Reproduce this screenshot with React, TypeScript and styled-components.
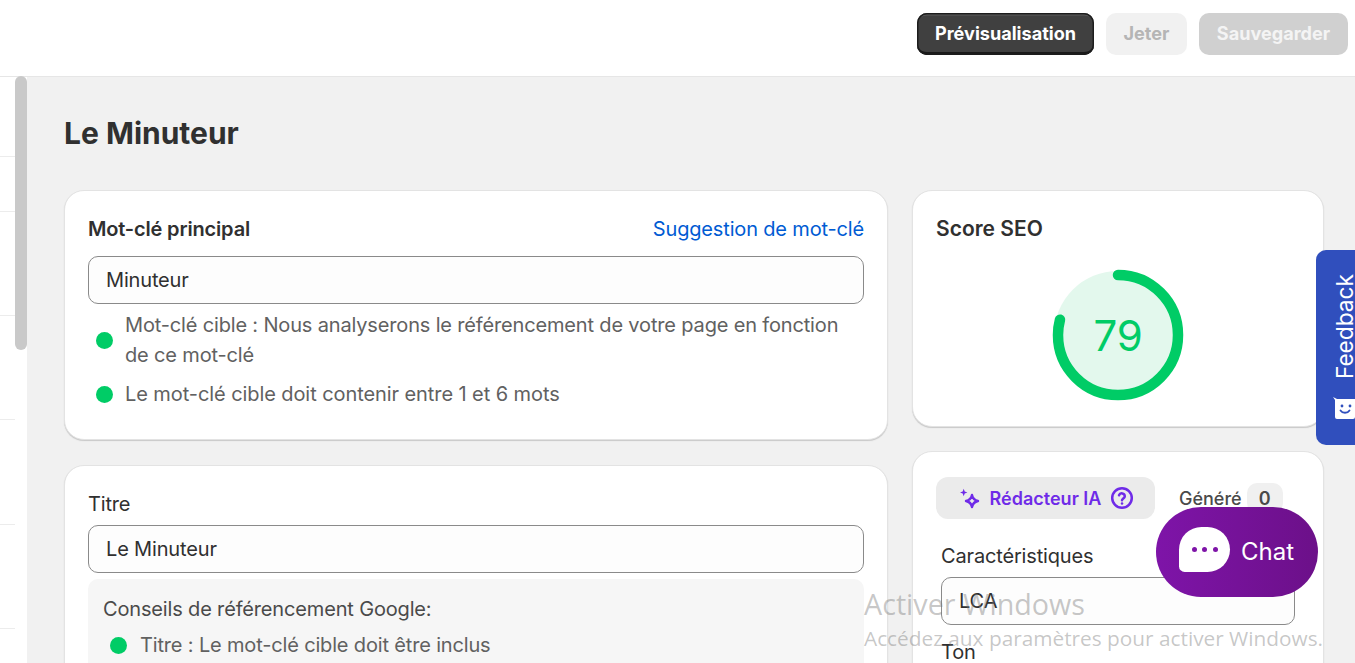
import React from "react";
import styled, { createGlobalStyle } from "styled-components";

const Global = createGlobalStyle`
  html, body { margin: 0; padding: 0; height: 663px; overflow: hidden; background: #fff; }
  body { font-family: Inter, "Liberation Sans", sans-serif; color: #303030; }
  #root { height: 663px; }
  * { box-sizing: border-box; }
`;

const Page = styled.div`
  position: relative;
  width: 1355px;
  height: 663px;
  overflow: hidden;
  display: flex;
  flex-direction: column;
`;

const TopBar = styled.header`
  height: 77px;
  flex: none;
  background: #fff;
  border-bottom: 1px solid #e6e6e6;
  display: flex;
  justify-content: flex-end;
  align-items: flex-start;
  gap: 12px;
  padding: 13px 7px 0 0;
`;

const BaseButton = styled.button`
  height: 42px;
  border-radius: 10px;
  border: 0;
  font: 700 18.1px Inter, sans-serif;
  padding: 0 0 2px;
`;

const PrimaryButton = styled(BaseButton)`
  width: 177px;
  background: #404040;
  color: #fff;
  box-shadow: inset 0 0 0 1.5px #1c1c1c, inset 0 3.5px 0 -1px #5c5c5c, inset 0 -4px 0 -1px #1a1a1a;
`;

const GhostButton = styled(BaseButton)`
  width: 81px;
  background: #f1f1f1;
  color: #b5b5b5;
`;

const SaveButton = styled(BaseButton)`
  width: 149px;
  background: #d0d0d0;
  color: #f4f4f4;
`;

const Body = styled.div`
  flex: 1;
  display: flex;
  min-height: 0;
`;

const SideList = styled.div`
  width: 15px;
  flex: none;
  display: flex;
  flex-direction: column;
  padding-top: 79px;
`;

const SideRow = styled.div<{ $h: number }>`
  height: ${(p) => p.$h}px;
  flex: none;
  border-bottom: 1px solid #ececec;
`;

const ScrollTrack = styled.div`
  width: 12px;
  flex: none;
  background: #fff;
`;

const ScrollThumb = styled.div`
  width: 12px;
  height: 274px;
  margin-top: -1px;
  border-radius: 6px;
  background: #c9c9c9;
`;

const Main = styled.main`
  flex: 1;
  min-width: 0;
  background: #f1f1f1;
  padding: 36px 31px 0 37px;
`;

const Title = styled.h1`
  margin: 0 0 37px;
  font-size: 30px;
  font-weight: 700;
  line-height: 40px;
  color: #303030;
`;

const Columns = styled.div`
  display: grid;
  grid-template-columns: 824px 412px;
  gap: 24px;
`;

const Column = styled.div<{ $gap: number }>`
  display: flex;
  flex-direction: column;
  gap: ${(p) => p.$gap}px;
`;

const Card = styled.section<{ $h?: number }>`
  background: #fff;
  border-radius: 20px;
  border: 1px solid #e3e3e3;
  box-shadow: 0 1px 1px #c8c8c8;
  letter-spacing: -0.16px;
  ${(p) => (p.$h ? `height: ${p.$h}px;` : "")}
`;

const KeywordCard = styled(Card)`
  padding: 21px 23px 0;
`;

const TitleCard = styled(Card)`
  padding: 23px 23px 0;
`;

const CardHead = styled.div`
  display: flex;
  justify-content: space-between;
  align-items: center;
  height: 33px;
  margin-bottom: 11px;
`;

const StrongLabel = styled.span`
  font-size: 20px;
  font-weight: 600;
`;

const TextLink = styled.a`
  font-size: 20px;
  color: #005bd3;
`;

const PlainLabel = styled.label`
  display: block;
  font-size: 20px;
  line-height: 30px;
  margin-bottom: 6px;
`;

const Field = styled.div`
  height: 48px;
  background: #fdfdfd;
  border: 1px solid #8a8a8a;
  border-radius: 10px;
  padding-left: 17px;
  display: flex;
  align-items: center;
  font-size: 20px;
  color: #303030;
`;

const Hints = styled.ul`
  margin: 6px 0 0;
  padding: 0;
  list-style: none;
  display: flex;
  flex-direction: column;
  gap: 9px;
`;

const Hint = styled.li<{ $spacing?: number }>`
  display: flex;
  align-items: center;
  gap: 12px;
  padding-left: 8px;
  font-size: 20px;
  line-height: 30px;
  color: #616161;
  ${(p) => (p.$spacing !== undefined ? `letter-spacing: ${p.$spacing}px;` : "")}
`;

const TipHint = styled(Hint)`
  padding-left: 7px;
  gap: 13px;
`;

const Dot = styled.span`
  width: 17px;
  height: 17px;
  flex: none;
  border-radius: 50%;
  background: #00cc66;
`;

const Tips = styled.div`
  margin-top: 6px;
  background: #f6f6f6;
  border-radius: 10px;
  padding: 15px 15px 0;
  height: 120px;
`;

const TipsTitle = styled.div`
  font-size: 20px;
  line-height: 30px;
  color: #4a4a4a;
  margin-bottom: 6px;
`;

const ScoreCard = styled(Card)`
  padding: 21px 23px 0;
`;

const ScoreTitle = styled.h2`
  margin: 0;
  font-size: 21px;
  font-weight: 600;
  line-height: 33px;
  letter-spacing: 0;
`;

const GaugeWrap = styled.div`
  position: relative;
  width: 132px;
  height: 132px;
  margin: 24px 0 0 116px;
`;

const GaugeValue = styled.div`
  position: absolute;
  inset: 0;
  display: flex;
  align-items: center;
  justify-content: center;
  font-size: 42px;
  color: #00cc66;
`;

const WriterCard = styled(Card)`
  padding: 25px 28px 0 23px;
  height: 240px;
`;

const TabRow = styled.div`
  display: flex;
  align-items: center;
  gap: 24px;
`;

const WriterTab = styled.div`
  width: 219px;
  height: 42px;
  border-radius: 12px;
  background: #ebebeb;
  display: flex;
  align-items: center;
  justify-content: center;
  gap: 9px;
  padding-left: 2px;
  font-size: 18px;
  font-weight: 600;
  letter-spacing: 0;
  color: #6f2be8;
`;

const Generated = styled.div`
  display: flex;
  align-items: center;
  gap: 5px;
  font-size: 18px;
  font-weight: 500;
  letter-spacing: 0;
  color: #4a4a4a;
`;

const Count = styled.span`
  width: 36px;
  height: 30px;
  border-radius: 10px;
  background: #f0f0f0;
  display: flex;
  align-items: center;
  justify-content: center;
  font-weight: 600;
`;

const WriterBody = styled.div`
  padding: 22px 0 0 5px;
`;

const WriterLabel = styled.div<{ $top?: number }>`
  font-size: 20px;
  line-height: 30px;
  color: #303030;
  margin-top: ${(p) => p.$top ?? 0}px;
  margin-bottom: 6px;
`;

const Feedback = styled.div`
  position: absolute;
  left: 1316px;
  top: 250px;
  width: 60px;
  height: 195px;
  border-radius: 10px;
  background: #304fbd;
  color: #fff;
`;

const FeedbackText = styled.span`
  position: absolute;
  left: 14px;
  top: 24px;
  writing-mode: vertical-rl;
  transform: rotate(180deg);
  font-size: 22.7px;
  line-height: 30px;
`;

const FeedbackIcon = styled.svg`
  position: absolute;
  left: 17px;
  top: 146px;
`;

const ChatBubble = styled.div`
  position: absolute;
  left: 1156px;
  top: 507px;
  width: 162px;
  height: 90px;
  border-radius: 45px;
  background: linear-gradient(90deg, #7e14a8, #6c1089);
  display: flex;
  align-items: center;
  padding: 0 0 2px 23px;
  gap: 11px;
  color: #fff;
  font-size: 24px;
`;

const ChatIcon = styled.div`
  width: 51px;
  height: 45px;
  margin-top: -3px;
  border-radius: 24px 24px 24px 6px;
  background: #fff;
  display: flex;
  align-items: center;
  justify-content: center;
  gap: 5.5px;
`;

const ChatDot = styled.span`
  width: 5px;
  height: 5px;
  border-radius: 50%;
  background: #7e14a8;
`;

const Watermark = styled.div`
  position: absolute;
  left: 864px;
  top: 586px;
  color: rgba(120, 120, 120, 0.42);
  pointer-events: none;
  font-family: "Open Sans", "Noto Sans", sans-serif;
`;

const WatermarkTitle = styled.div`
  font-size: 28.7px;
  line-height: 36px;
`;

const WatermarkSub = styled.div`
  font-size: 20.8px;
  line-height: 26px;
  margin-top: 3px;
  white-space: nowrap;
`;

function Gauge() {
  const r = 60;
  const c = 2 * Math.PI * r;
  return (
    <GaugeWrap>
      <svg width="132" height="132" viewBox="0 0 132 132">
        <circle cx="66" cy="66" r="64" fill="#e3f8ed" />
        <circle
          cx="66"
          cy="66"
          r={r}
          fill="none"
          stroke="#00cc66"
          strokeWidth="10.5"
          strokeLinecap="round"
          strokeDasharray={`${c * 0.79} ${c}`}
          transform="rotate(-90 66 66)"
        />
      </svg>
      <GaugeValue>79</GaugeValue>
    </GaugeWrap>
  );
}

export default function App() {
  return (
    <Page>
      <Global />
      <TopBar>
        <PrimaryButton>Prévisualisation</PrimaryButton>
        <GhostButton>Jeter</GhostButton>
        <SaveButton>Sauvegarder</SaveButton>
      </TopBar>
      <Body>
        <SideList>
          <SideRow $h={0} />
          <SideRow $h={55} />
          <SideRow $h={104} />
          <SideRow $h={104} />
          <SideRow $h={105} />
          <SideRow $h={104} />
        </SideList>
        <ScrollTrack>
          <ScrollThumb />
        </ScrollTrack>
        <Main>
          <Title>Le Minuteur</Title>
          <Columns>
            <Column $gap={25}>
              <KeywordCard $h={250}>
                <CardHead>
                  <StrongLabel>Mot-clé principal</StrongLabel>
                  <TextLink>Suggestion de mot-clé</TextLink>
                </CardHead>
                <Field>Minuteur</Field>
                <Hints>
                  <Hint>
                    <Dot />
                    <span>
                      Mot-clé cible : Nous analyserons le référencement de votre page en fonction de ce mot-clé
                    </span>
                  </Hint>
                  <Hint $spacing={-0.08}>
                    <Dot />
                    <span>Le mot-clé cible doit contenir entre 1 et 6 mots</span>
                  </Hint>
                </Hints>
              </KeywordCard>
              <TitleCard $h={300}>
                <PlainLabel>Titre</PlainLabel>
                <Field>Le Minuteur</Field>
                <Tips>
                  <TipsTitle>Conseils de référencement Google:</TipsTitle>
                  <TipHint>
                    <Dot />
                    <span>Titre : Le mot-clé cible doit être inclus</span>
                  </TipHint>
                </Tips>
              </TitleCard>
            </Column>
            <Column $gap={24}>
              <ScoreCard $h={237}>
                <ScoreTitle>Score SEO</ScoreTitle>
                <Gauge />
              </ScoreCard>
              <WriterCard>
                <TabRow>
                  <WriterTab>
                    <svg width="22" height="22" viewBox="0 0 22 22" fill="none">
                      <path
                        d="M13 8Q14 13 19 14Q14 15 13 20Q12 15 7 14Q12 13 13 8Z"
                        stroke="#6f2be8"
                        strokeWidth="2.4"
                        strokeLinejoin="round"
                      />
                      <path d="M4.7 1.8l1 2.7 2.7 1-2.7 1-1 2.7-1-2.7-2.7-1 2.7-1z" fill="#6f2be8" />
                    </svg>
                    <span>Rédacteur IA</span>
                    <svg width="24" height="24" viewBox="0 0 24 24" fill="none" stroke="#6f2be8" strokeWidth="2.5" strokeLinecap="round">
                      <circle cx="12" cy="12" r="9.8" />
                      <path d="M9 9.3a3 3 0 0 1 5.8 1c0 2-2.8 2.4-2.8 4" />
                      <path d="M12 17.4v.1" />
                    </svg>
                  </WriterTab>
                  <Generated>
                    Généré
                    <Count>0</Count>
                  </Generated>
                </TabRow>
                <WriterBody>
                  <WriterLabel>Caractéristiques</WriterLabel>
                  <Field>LCA</Field>
                  <WriterLabel $top={12}>Ton</WriterLabel>
                </WriterBody>
              </WriterCard>
            </Column>
          </Columns>
        </Main>
      </Body>
      <Watermark>
        <WatermarkTitle>Activer Windows</WatermarkTitle>
        <WatermarkSub>Accédez aux paramètres pour activer Windows.</WatermarkSub>
      </Watermark>
      <Feedback>
        <FeedbackText>Feedback</FeedbackText>
        <FeedbackIcon width="24" height="24" viewBox="0 0 24 24">
          <path d="M0 1l4 2h18v18a2 2 0 0 1-2 2H4a2 2 0 0 1-2-2V4z" fill="#fff" />
          <circle cx="9" cy="10" r="1.4" fill="#304fbd" />
          <circle cx="17" cy="10" r="1.4" fill="#304fbd" />
          <path d="M7.5 14.5c2 3 7 3 9 0" stroke="#304fbd" strokeWidth="1.8" fill="none" strokeLinecap="round" />
        </FeedbackIcon>
      </Feedback>
      <ChatBubble>
        <ChatIcon>
          <ChatDot />
          <ChatDot />
          <ChatDot />
        </ChatIcon>
        Chat
      </ChatBubble>
    </Page>
  );
}
